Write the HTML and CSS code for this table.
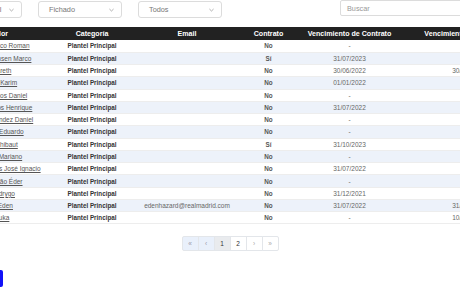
FILE: index.html
```html
<!DOCTYPE html>
<html lang="es">
<head>
  <meta charset="UTF-8">
  <title>Jugadores</title>
  <link rel="stylesheet" href="styles.css">
</head>
<body>
  <div class="page">
    <div class="filters">
      <div class="select"><span>Plantel Principal</span><svg class="chev" viewBox="0 0 6 4"><path d="M0.5 0.8 3 3.2 5.5 0.8"/></svg></div>
      <div class="select"><span>Fichado</span><svg class="chev" viewBox="0 0 6 4"><path d="M0.5 0.8 3 3.2 5.5 0.8"/></svg></div>
      <div class="select"><span>Todos</span><svg class="chev" viewBox="0 0 6 4"><path d="M0.5 0.8 3 3.2 5.5 0.8"/></svg></div>
      <div class="search">Buscar</div>
    </div>

    <table class="players">
      <colgroup>
        <col style="width:100px"><col style="width:96px"><col style="width:94px">
        <col style="width:69px"><col style="width:93px"><col style="width:145px">
      </colgroup>
      <thead>
        <tr><th>Jugador</th><th>Categoría</th><th>Email</th><th>Contrato</th><th>Vencimiento de Contrato</th><th>Vencimiento de Pasaporte</th></tr>
      </thead>
      <tbody>
        <tr><td><a href="#">Altube Francisco Roman</a></td><td class="cat">Plantel Principal</td><td></td><td class="yn">No</td><td>-</td><td>-</td></tr>
        <tr><td><a href="#">Asensio Willemsen Marco</a></td><td class="cat">Plantel Principal</td><td></td><td class="yn">Sí</td><td>31/07/2023</td><td>-</td></tr>
        <tr><td><a href="#">Bale Gareth</a></td><td class="cat">Plantel Principal</td><td></td><td class="yn">No</td><td>30/06/2022</td><td>30/06/2022</td></tr>
        <tr><td><a href="#">Benzema Karim</a></td><td class="cat">Plantel Principal</td><td></td><td class="yn">No</td><td>01/01/2022</td><td>-</td></tr>
        <tr><td><a href="#">Carvajal Ramos Daniel</a></td><td class="cat">Plantel Principal</td><td></td><td class="yn">No</td><td>-</td><td>-</td></tr>
        <tr><td><a href="#">Casemiro Carlos Henrique</a></td><td class="cat">Plantel Principal</td><td></td><td class="yn">No</td><td>31/07/2022</td><td>-</td></tr>
        <tr><td><a href="#">Ceballos Fernández Daniel</a></td><td class="cat">Plantel Principal</td><td></td><td class="yn">No</td><td>-</td><td>-</td></tr>
        <tr><td><a href="#">Camavinga Eduardo</a></td><td class="cat">Plantel Principal</td><td></td><td class="yn">No</td><td>-</td><td>-</td></tr>
        <tr><td><a href="#">Courtois Thibaut</a></td><td class="cat">Plantel Principal</td><td></td><td class="yn">Sí</td><td>31/10/2023</td><td>-</td></tr>
        <tr><td><a href="#">Díaz Mejía Mariano</a></td><td class="cat">Plantel Principal</td><td></td><td class="yn">No</td><td>-</td><td>-</td></tr>
        <tr><td><a href="#">Fernández Iglesias José Ignacio</a></td><td class="cat">Plantel Principal</td><td></td><td class="yn">No</td><td>31/07/2022</td><td>-</td></tr>
        <tr><td><a href="#">Gabriel Militão Éder</a></td><td class="cat">Plantel Principal</td><td></td><td class="yn">No</td><td>-</td><td>-</td></tr>
        <tr><td><a href="#">Goes Rodrygo</a></td><td class="cat">Plantel Principal</td><td></td><td class="yn">No</td><td>31/12/2021</td><td>-</td></tr>
        <tr><td><a href="#">Hazard Eden</a></td><td class="cat">Plantel Principal</td><td>edenhazard@realmadrid.com</td><td class="yn">No</td><td>31/07/2022</td><td>31/07/2022</td></tr>
        <tr><td><a href="#">Jović Luka</a></td><td class="cat">Plantel Principal</td><td></td><td class="yn">No</td><td>-</td><td>10/06/2022</td></tr>
      </tbody>
    </table>
  </div>

  <nav class="pager">
    <span class="pg off">«</span>
    <span class="pg off">‹</span>
    <span class="pg cur">1</span>
    <span class="pg">2</span>
    <span class="pg dim">›</span>
    <span class="pg dim">»</span>
  </nav>

  <button class="add">Guardar</button>
</body>
</html>
```

FILE: styles.css
```css
body {
  margin: 0; overflow: hidden; background: #fff;
  font-family: "Liberation Sans", Arial, sans-serif;
  color: #555;
}
.page { width: 600px; margin-left: -62px; }

.filters { display: flex; align-items: flex-start; gap: 16px; }
.select {
  width: 84px; height: 17px; margin-top: 1px; box-sizing: border-box;
  display: flex; align-items: center; justify-content: space-between;
  padding: 0 7px 0 10px; border: 1px solid #dcdcdc; border-radius: 3px;
  font-size: 7.3px; color: #777; white-space: nowrap;
}
.chev { width: 5px; height: 4px; fill: none; stroke: #8a8a8a; stroke-width: 0.8; }
.search {
  margin-left: auto; width: 198px; height: 16px; box-sizing: border-box;
  display: flex; align-items: center; padding-left: 6px;
  border: 1px solid #dcdcdc; border-radius: 2px;
  font-size: 7.3px; color: #999;
}

.players {
  margin: 9px 0 0 6px; border-collapse: collapse; table-layout: fixed;
  width: 597px;
}
.players th {
  background: #222; color: #fff; font-size: 7.1px; font-weight: bold;
  height: 13px; padding: 0; white-space: nowrap;
}
.players td {
  height: 12.27px; padding: 0; text-align: center; white-space: nowrap;
  font-size: 6.5px; color: #666; box-sizing: border-box;
  border-bottom: 1px solid #ededed;
}
.players tbody tr:nth-child(even) td { background: #edf2fa; }
.players a { color: #555; text-decoration: underline; }
.players td.cat { color: #333; font-weight: bold; font-size: 6.3px; }
.players td.yn { color: #555; font-weight: bold; font-size: 6.3px; }

.pager { display: flex; justify-content: center; margin-top: 12px; }
.pg {
  width: 17px; height: 15px; box-sizing: border-box;
  display: flex; align-items: center; justify-content: center;
  border: 1px solid #e3e6ea; margin-left: -1px;
  font-size: 6.5px; color: #333; background: #fff;
}
.pg:first-child { border-radius: 2px 0 0 2px; margin-left: 0; }
.pg:last-child { border-radius: 0 2px 2px 0; }
.pg.off { background: #e9f0fb; color: #99a; }
.pg.cur { background: #e9ebee; }
.pg.dim { color: #aaa; }

.add {
  display: block; margin: 19px 0 0 -60px; width: 63px; height: 17px;
  border: 0; border-radius: 2px; background: #1212f8; color: #fff;
  font-size: 7px;
}
```
